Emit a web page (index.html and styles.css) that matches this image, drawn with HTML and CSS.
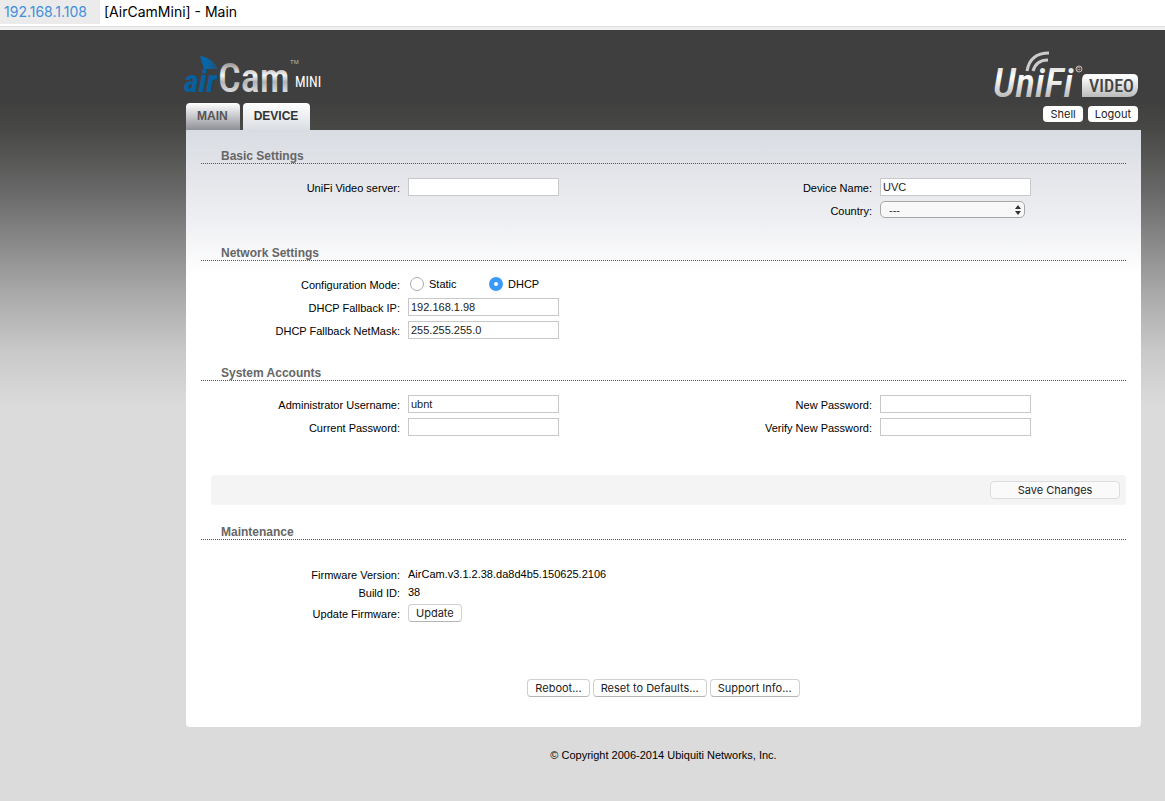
FILE: index.html
```
<!DOCTYPE html>
<html lang="en">

<head>
    <meta charset="UTF-8">
    <meta name="viewport" content="width=device-width, initial-scale=1.0">
    <title>[AirCamMini] - Main</title>

    <link rel="stylesheet" href="styles.css">
</head>

<body>
    <div class="titlebar">
        <span class="host">192.168.1.108</span>
        <span class="title">[AirCamMini] - Main</span>
    </div>

    <div class="page">
        <header class="header">
            <div class="header-left">
                <svg class="logo-aircam" width="150" height="42" viewBox="0 0 150 42" role="img" aria-label="airCam mini">
                    <defs>
                        <linearGradient id="silver" gradientUnits="userSpaceOnUse" x1="0" y1="6" x2="0" y2="38">
                            <stop offset="0" stop-color="#8a8585"/>
                            <stop offset="0.45" stop-color="#f4f4f4"/>
                            <stop offset="0.65" stop-color="#b5b3b3"/>
                            <stop offset="1" stop-color="#dedede"/>
                        </linearGradient>
                        <linearGradient id="wing" x1="0" y1="0" x2="1" y2="0">
                            <stop offset="0.4" stop-color="#0766a9"/>
                            <stop offset="1" stop-color="#0766a9" stop-opacity="0.4"/>
                        </linearGradient>
                    </defs>
                    <path d="M20 1 C28 2 35 7 38 14 L24 14 Z" fill="url(#wing)"/>
                    <text class="logo-air" x="4" y="37">air</text>
                    <text class="logo-cam" x="38" y="37" fill="url(#silver)">Cam</text>
                    <text class="logo-tm" x="110" y="9">TM</text>
                    <text class="logo-mini" x="115" y="32">MINI</text>
                </svg>
                <nav class="tabs">
                    <a href="#main" class="tab">MAIN</a>
                    <a href="#device" class="tab active">DEVICE</a>
                </nav>
            </div>
            <div class="header-right">
                <svg class="logo-unifi" width="146" height="50" viewBox="0 0 146 50" role="img" aria-label="UniFi Video">
                    <defs>
                        <linearGradient id="light" gradientUnits="userSpaceOnUse" x1="0" y1="12" x2="0" y2="48">
                            <stop offset="0" stop-color="#ccc"/>
                            <stop offset="0.4" stop-color="#fff"/>
                            <stop offset="1" stop-color="#b8b8b8"/>
                        </linearGradient>
                    </defs>
                    <g fill="none" stroke="#ccc" stroke-width="3">
                        <path d="M35 21 C37 9 45 3 57 3"/>
                        <path d="M41 21 C43 14 48 10 56 10"/>
                    </g>
                    <text class="logo-unifi-name" x="1" y="47" fill="url(#light)">UniFi</text>
                    <circle cx="87" cy="19" r="3" fill="none" stroke="#bbb"/>
                    <text class="logo-reg" x="85" y="21">R</text>
                    <path d="M94 24 H141 Q146 24 146 29 V38 Q145 47 136 47 H90 V31 Q90 24 94 24 Z" fill="url(#light)"/>
                    <text class="logo-video" x="97" y="42">VIDEO</text>
                </svg>
                <div class="header-buttons">
                    <button type="button">Shell</button>
                    <button type="button">Logout</button>
                </div>
            </div>
        </header>

        <main class="panel">
            <form>
                <h2>Basic Settings</h2>
                <div class="fields">
                    <div class="column">
                        <div class="row">
                            <label for="server">UniFi Video server:</label>
                            <input type="text" id="server" name="server">
                        </div>
                    </div>
                    <div class="column">
                        <div class="row">
                            <label for="deviceName">Device Name:</label>
                            <input type="text" id="deviceName" name="deviceName" value="UVC">
                        </div>
                        <div class="row">
                            <label for="country">Country:</label>
                            <div class="select">
                                <select id="country" name="country">
                                    <option>---</option>
                                </select>
                                <svg width="6" height="10" viewBox="0 0 6 10">
                                    <path d="M0 4 L3 0 L6 4 Z M0 6 L3 10 L6 6 Z" fill="#333"/>
                                </svg>
                            </div>
                        </div>
                    </div>
                </div>

                <h2>Network Settings</h2>
                <div class="fields">
                    <div class="column">
                        <div class="row" role="radiogroup" aria-labelledby="modeLabel">
                            <span class="label" id="modeLabel">Configuration Mode:</span>
                            <div class="radios">
                                <label><input type="radio" name="mode" value="static">Static</label>
                                <label><input type="radio" name="mode" value="dhcp" checked>DHCP</label>
                            </div>
                        </div>
                        <div class="row">
                            <label for="fallbackIp">DHCP Fallback IP:</label>
                            <input type="text" id="fallbackIp" name="fallbackIp" value="192.168.1.98">
                        </div>
                        <div class="row">
                            <label for="fallbackMask">DHCP Fallback NetMask:</label>
                            <input type="text" id="fallbackMask" name="fallbackMask" value="255.255.255.0">
                        </div>
                    </div>
                </div>

                <h2>System Accounts</h2>
                <div class="fields">
                    <div class="column">
                        <div class="row">
                            <label for="username">Administrator Username:</label>
                            <input type="text" id="username" name="username" value="ubnt">
                        </div>
                        <div class="row">
                            <label for="password">Current Password:</label>
                            <input type="password" id="password" name="password">
                        </div>
                    </div>
                    <div class="column">
                        <div class="row">
                            <label for="newPassword">New Password:</label>
                            <input type="password" id="newPassword" name="newPassword">
                        </div>
                        <div class="row">
                            <label for="verifyPassword">Verify New Password:</label>
                            <input type="password" id="verifyPassword" name="verifyPassword">
                        </div>
                    </div>
                </div>

                <div class="save-bar">
                    <button type="submit" class="save">Save Changes</button>
                </div>
            </form>

            <h2>Maintenance</h2>
            <div class="fields maintenance">
                <div class="column">
                    <div class="row info">
                        <span class="label">Firmware Version:</span>
                        <span>AirCam.v3.1.2.38.da8d4b5.150625.2106</span>
                    </div>
                    <div class="row info">
                        <span class="label">Build ID:</span>
                        <span>38</span>
                    </div>
                    <div class="row">
                        <label for="update">Update Firmware:</label>
                        <button type="button" id="update">Update</button>
                    </div>
                </div>
            </div>

            <div class="actions">
                <button type="button">Reboot...</button>
                <button type="button">Reset to Defaults...</button>
                <button type="button">Support Info...</button>
            </div>
        </main>

        <footer>&copy; Copyright 2006-2014 Ubiquiti Networks, Inc.</footer>
    </div>
</body>

</html>
```
FILE: styles.css
```
* {
    box-sizing: border-box;
}

html {
    background-color: #dbdbdb;
}

body {
    margin: 0;
    font-family: "Liberation Sans", Arial, sans-serif;
    font-size: 11px;
    color: #000;
}

.titlebar {
    display: flex;
    height: 30px;
    font-family: Inter, sans-serif;
    font-size: 14px;
    line-height: 24px;
    border-bottom: 3px solid #efefef;
    background: linear-gradient(#fff 26px, #ddd 26px);
}

.host {
    height: 24px;
    width: 100px;
    padding-left: 4px;
    color: #3f8fdb;
    background-color: #ebebeb;
}

.title {
    padding-left: 4px;
}

.page {
    padding: 0 24px 32px 186px;
    background: linear-gradient(#3f3f3f 70px, #484846 100px, #6a6a6a 165px, #8e8e8e 220px, #adadad 270px, #c8c8c8 320px, #dbdbdb 375px);
}

/* header */
.header {
    display: flex;
    justify-content: space-between;
    height: 100px;
}

.header-left,
.header-right {
    display: flex;
    flex-direction: column;
    justify-content: space-between;
}

.header-left {
    padding-top: 25px;
}

.header-right {
    align-items: flex-end;
    padding: 20px 3px 8px 0;
}

.logo-aircam {
    margin-left: -6px;
    overflow: visible;
}

.logo-air,
.logo-cam,
.logo-mini,
.logo-unifi-name,
.logo-video {
    font-family: "Liberation Sans Narrow", "Roboto Condensed", "Liberation Sans", sans-serif;
}

.logo-air {
    font-size: 32px;
    font-weight: bold;
    font-style: italic;
    fill: #04609f;
}

.logo-cam {
    font-size: 40px;
    font-weight: 500;
}

.logo-tm {
    font-size: 6px;
    fill: #bbb;
}

.logo-mini {
    font-size: 14px;
    fill: #fff;
}

.logo-unifi-name {
    font-size: 41px;
    font-weight: 500;
    font-style: italic;
}

.logo-reg {
    font-size: 5px;
    fill: #bbb;
}

.logo-video {
    font-size: 18px;
    font-weight: 500;
    fill: #444;
}

.tabs {
    display: flex;
    gap: 3px;
}

.tab {
    height: 27px;
    padding: 0 12px 0 11px;
    border-radius: 4px 4px 0 0;
    font-size: 12px;
    font-weight: bold;
    line-height: 26px;
    color: #555;
    text-decoration: none;
    background: linear-gradient(#fff, #8e9097);
}

.tab.active {
    color: #333;
    background: linear-gradient(#fff, #dadde3);
}

/* buttons */
button {
    height: 18px;
    padding: 0 7px;
    border: 1px solid #d0d0d0;
    border-bottom-color: #b4b4b4;
    border-radius: 4px;
    font-family: Inter, sans-serif;
    font-size: 11px;
    line-height: 16px;
    color: #222;
    background-color: #fff;
}

.header-buttons {
    display: flex;
    gap: 5px;
}

.header-buttons button {
    height: 16px;
    border: none;
}

.save-bar {
    display: flex;
    justify-content: flex-end;
    align-items: center;
    height: 30px;
    margin: 36px 15px 20px 25px;
    padding-right: 6px;
    border-radius: 4px;
    background-color: #f4f4f4;
}

.save {
    width: 130px;
    border-color: #ddd;
    background-color: #fafafa;
}

.actions {
    display: flex;
    justify-content: center;
    gap: 3px;
}

/* content */
.panel {
    padding: 19px 0 30px;
    border-radius: 0 0 4px 4px;
    background: linear-gradient(#d9dce2, #eeeff2 90px, #fff 145px);
}

h2 {
    margin: 0 15px 12px;
    padding-left: 20px;
    border-bottom: 1px dotted #555;
    font-size: 12px;
    line-height: 14px;
    color: #666;
}

.fields {
    display: grid;
    grid-template-columns: 1fr 1fr;
    margin: 0 1px 24px 10px;
}

.maintenance {
    margin-top: 26px;
    margin-bottom: 54px;
}

.row {
    display: grid;
    grid-template-columns: 204px 1fr;
    column-gap: 8px;
    align-items: center;
    justify-items: start;
    height: 23px;
    padding-bottom: 2px;
}

.row.info {
    height: 18px;
}

.row > label,
.label {
    justify-self: end;
    padding-top: 2px;
}

input[type="text"],
input[type="password"] {
    width: 151px;
    height: 18px;
    padding: 0 2px;
    border: 1px solid #c8c8c8;
    font-family: inherit;
    font-size: 11px;
    color: #222;
    background-color: #fff;
}

.select {
    position: relative;
    height: 17px;
}

.select select {
    appearance: none;
    width: 145px;
    height: 17px;
    padding: 0 8px;
    border: 1px solid #a6a6a6;
    border-radius: 5px;
    font-family: inherit;
    font-size: 11px;
    color: #333;
    background-color: #f8f8f8;
}

.select svg {
    position: absolute;
    top: 4px;
    right: 4px;
    pointer-events: none;
}

.radios {
    display: flex;
}

.radios label {
    display: flex;
    align-items: center;
    width: 79px;
}

input[type="radio"] {
    appearance: none;
    width: 14px;
    height: 14px;
    margin: 0 5px 0 2px;
    border: 1px solid #aaa;
    border-radius: 50%;
    background-color: #fff;
}

input[type="radio"]:checked {
    border: 5px solid #3b99fc;
}

footer {
    margin-top: 21px;
    line-height: 14px;
    text-align: center;
}
```
